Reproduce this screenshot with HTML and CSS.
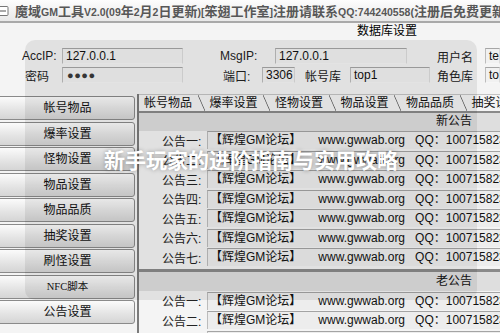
FILE: index.html
```html
<!doctype html>
<html>
<head>
<meta charset="utf-8">
<title>魔域GM工具</title>
<link rel="stylesheet" href="styles.css">
</head>
<body>
<div class="app">
  <div class="titlebar">
    <svg class="sysicon" width="10" height="12" viewBox="0 0 10 12"><rect x="-4" y="1.5" width="12" height="9" rx="1" fill="#fff" stroke="#777"/><line x1="0" y1="6" x2="6" y2="6" stroke="#555"/></svg>
    <span class="title">魔域<span class="en">GM</span>工具<span class="en">V2.0(09</span>年<span class="en">2</span>月<span class="en">2</span>日更新<span class="en">)[</span>笨翅工作室<span class="en">]</span>注册请联系<span class="en">QQ:744240558(</span>注册后免费更新<span class="en">)</span></span>
  </div>
  <div class="dbhead">数据库设置</div>
  <div class="dbform">
    <div class="frow">
      <label class="lb lb-acc">AccIP:</label><div class="inp inp-acc">127.0.0.1</div>
      <label class="lb lb-msg">MsgIP:</label><div class="inp inp-msg">127.0.0.1</div>
      <label class="lb lb-user">用户名</label><div class="inp inp-r">test</div>
    </div>
    <div class="frow">
      <label class="lb lb-pwd">密码</label><div class="inp inp-acc pwd">●●●●</div>
      <label class="lb lb-port">端口:</label><div class="inp inp-port">3306</div>
      <label class="lb lb-db">帐号库</label><div class="inp inp-db">top1</div>
      <label class="lb lb-role">角色库</label><div class="inp inp-r">top1</div>
    </div>
  </div>
  <div class="main">
    <div class="sidebar">
      <div class="sbtn">帐号物品</div>
      <div class="sbtn">爆率设置</div>
      <div class="sbtn">怪物设置</div>
      <div class="sbtn">物品设置</div>
      <div class="sbtn">物品品质</div>
      <div class="sbtn">抽奖设置</div>
      <div class="sbtn">刷怪设置</div>
      <div class="sbtn small">NFC脚本</div>
      <div class="sbtn">公告设置</div>
    </div>
    <div class="panel">
      <div class="tabs">
        <div class="tab">帐号物品</div>
        <div class="tab">爆率设置</div>
        <div class="tab">怪物设置</div>
        <div class="tab">物品设置</div>
        <div class="tab">物品品质</div>
        <div class="tab">抽奖设置</div>
      </div>
      <div class="section">
        <div class="sechead">新公告</div>
        <div class="arow"><span class="alab">公告一:</span><div class="afield"><span>【辉煌GM论坛】</span><span class="f-site">www.gwwab.org</span><span class="f-qq">QQ：1007158236</span></div></div>
        <div class="arow"><span class="alab">公告二:</span><div class="afield"><span>【辉煌GM论坛】</span><span class="f-site">www.gwwab.org</span><span class="f-qq">QQ：1007158236</span></div></div>
        <div class="arow"><span class="alab">公告三:</span><div class="afield"><span>【辉煌GM论坛】</span><span class="f-site">www.gwwab.org</span><span class="f-qq">QQ：1007158236</span></div></div>
        <div class="arow"><span class="alab">公告四:</span><div class="afield"><span>【辉煌GM论坛】</span><span class="f-site">www.gwwab.org</span><span class="f-qq">QQ：1007158236</span></div></div>
        <div class="arow"><span class="alab">公告五:</span><div class="afield"><span>【辉煌GM论坛】</span><span class="f-site">www.gwwab.org</span><span class="f-qq">QQ：1007158236</span></div></div>
        <div class="arow"><span class="alab">公告六:</span><div class="afield"><span>【辉煌GM论坛】</span><span class="f-site">www.gwwab.org</span><span class="f-qq">QQ：1007158236</span></div></div>
        <div class="arow"><span class="alab">公告七:</span><div class="afield"><span>【辉煌GM论坛】</span><span class="f-site">www.gwwab.org</span><span class="f-qq">QQ：1007158236</span></div></div>
      </div>
      <div class="section old">
        <div class="sechead">老公告</div>
        <div class="arow"><span class="alab">公告一:</span><div class="afield"><span>【辉煌GM论坛】</span><span class="f-site">www.gwwab.org</span><span class="f-qq">QQ：1007158236</span></div></div>
        <div class="arow"><span class="alab">公告二:</span><div class="afield"><span>【辉煌GM论坛】</span><span class="f-site">www.gwwab.org</span><span class="f-qq">QQ：1007158236</span></div></div>
        <div class="arow"><span class="alab">公告三:</span><div class="afield"><span>【辉煌GM论坛】</span><span class="f-site">www.gwwab.org</span><span class="f-qq">QQ：1007158236</span></div></div>
      </div>
    </div>
  </div>
  <div class="shade"><div class="caption">新手玩家的进阶指南与实用攻略</div></div>
</div>
</body>
</html>
```

FILE: styles.css
```css
body {
    margin: 0;
    background: #f4f4f4;
}
.app {
    position: relative;
    width: 500px;
    height: 333px;
    overflow: hidden;
    background: #f4f4f4;
    color: #111;
    font: 12px "Liberation Sans", "Noto Sans CJK SC", sans-serif;
}

/* title bar */
.titlebar {
    height: 21px;
    display: flex;
    align-items: center;
    white-space: nowrap;
    overflow: hidden;
    background: linear-gradient(#fdfdfd, #e8e8e8);
    border-bottom: 2px solid #a9a9a9;
}
.sysicon {
    flex: none;
    margin-right: 5px;
}
.title {
    font-weight: bold;
    font-size: 13px;
    color: #575757;
}
.title .en {
    font-size: 10.5px;
}

.dbhead {
    height: 17px;
    line-height: 17px;
    padding-left: 357px;
    color: #000;
}

/* database form */
.dbform {
    height: 46px;
    padding-top: 8px;
}
.frow {
    display: flex;
    align-items: center;
    height: 16px;
    margin-bottom: 3px;
    white-space: nowrap;
}
.lb {
    flex: none;
    box-sizing: border-box;
    color: #222;
}
.lb-acc { width: 62px; padding-left: 22px; }
.lb-pwd { width: 62px; padding-left: 25px; }
.lb-msg { width: 55px; margin-left: 37px; }
.lb-port { width: 39px; margin-left: 40px; }
.lb-db { width: 45px; margin-left: 10px; }
.lb-user { width: 48px; margin-left: 30px; }
.lb-role { width: 48px; margin-left: 7px; }

.inp {
    flex: none;
    box-sizing: border-box;
    height: 16px;
    line-height: 14px;
    padding-left: 3px;
    overflow: hidden;
    background: #f1f1f1;
    border: 1px solid;
    border-color: #a6a6a6 #dcdcdc #f6f6f6 #bcbcbc;
}
.inp-acc { width: 121px; }
.inp-msg { width: 132px; }
.inp-port { width: 33px; }
.inp-db { width: 80px; }
.inp-r { flex: 1; }
.pwd {
    font-size: 11px;
    letter-spacing: 0.5px;
    padding-left: 4px;
    color: #3a3a3a;
}

/* main area */
.main {
    display: flex;
    height: 239px;
}
.sidebar {
    flex: none;
    width: 139px;
    margin-left: -4px;
    padding-top: 2px;
    display: flex;
    flex-direction: column;
    gap: 1.5px;
}
.sbtn {
    height: 24px;
    box-sizing: border-box;
    padding-left: 4px;
    line-height: 22px;
    text-align: center;
    border: 1px solid #8a8a8a;
    border-radius: 3px;
    background: linear-gradient(#fbfbfb, #e3e3e3 60%, #d5d5d5);
}
.sbtn.small {
    font-size: 10.5px;
    font-family: "Liberation Serif", "Noto Sans CJK SC", serif;
}

.panel {
    flex: 1;
    min-width: 0;
    margin-left: 2px;
    border-left: 2px solid #7b7b7b;
    overflow: hidden;
}
.tabs {
    display: flex;
    height: 17px;
    border-bottom: 2px solid #8a8a8a;
    white-space: nowrap;
}
.tab {
    position: relative;
    flex: none;
    width: 65.5px;
    box-sizing: border-box;
    padding-left: 5px;
    line-height: 17px;
    border-top: 1px solid #c4c4c4;
}
.tab::after {
    content: "";
    position: absolute;
    right: 0;
    top: 0;
    bottom: 0;
    width: 7px;
    background: linear-gradient(to top right, transparent calc(50% - 0.8px), #6e6e6e 50%, transparent calc(50% + 0.8px));
}

.sechead {
    height: 17.5px;
    line-height: 17.5px;
    text-align: right;
    padding-right: 28px;
    background: #dedede;
}
.old {
    margin-top: 2px;
    border-top: 3px solid #8a8a8a;
}
.old .sechead {
    height: 19px;
    line-height: 19px;
}
.arow {
    display: flex;
    align-items: center;
    height: 19.5px;
    padding-left: 23px;
    white-space: nowrap;
}
.alab {
    flex: none;
    width: 45px;
    color: #222;
}
.afield {
    flex: 1;
    height: 18px;
    box-sizing: border-box;
    line-height: 17px;
    padding-left: 2px;
    overflow: hidden;
    background: #ededed;
    border-top: 1px solid #a4a4a4;
    border-left: 1px solid #bcbcbc;
}
.f-site { margin-left: 17px; }
.f-qq { margin-left: 10px; }

/* dimmed overlay with caption */
.shade {
    position: absolute;
    left: 25px;
    top: 40px;
    width: 452px;
    height: 260px;
    border-radius: 10px;
    background: rgba(0, 0, 0, 0.075);
}
.caption {
    position: absolute;
    left: 0;
    right: 0;
    top: 106px;
    text-align: center;
    color: #fff;
    font: bold 21px "Noto Sans CJK SC", sans-serif;
    line-height: 26px;
    text-shadow: 0 0 4px rgba(0, 0, 0, 0.35);
}
```
